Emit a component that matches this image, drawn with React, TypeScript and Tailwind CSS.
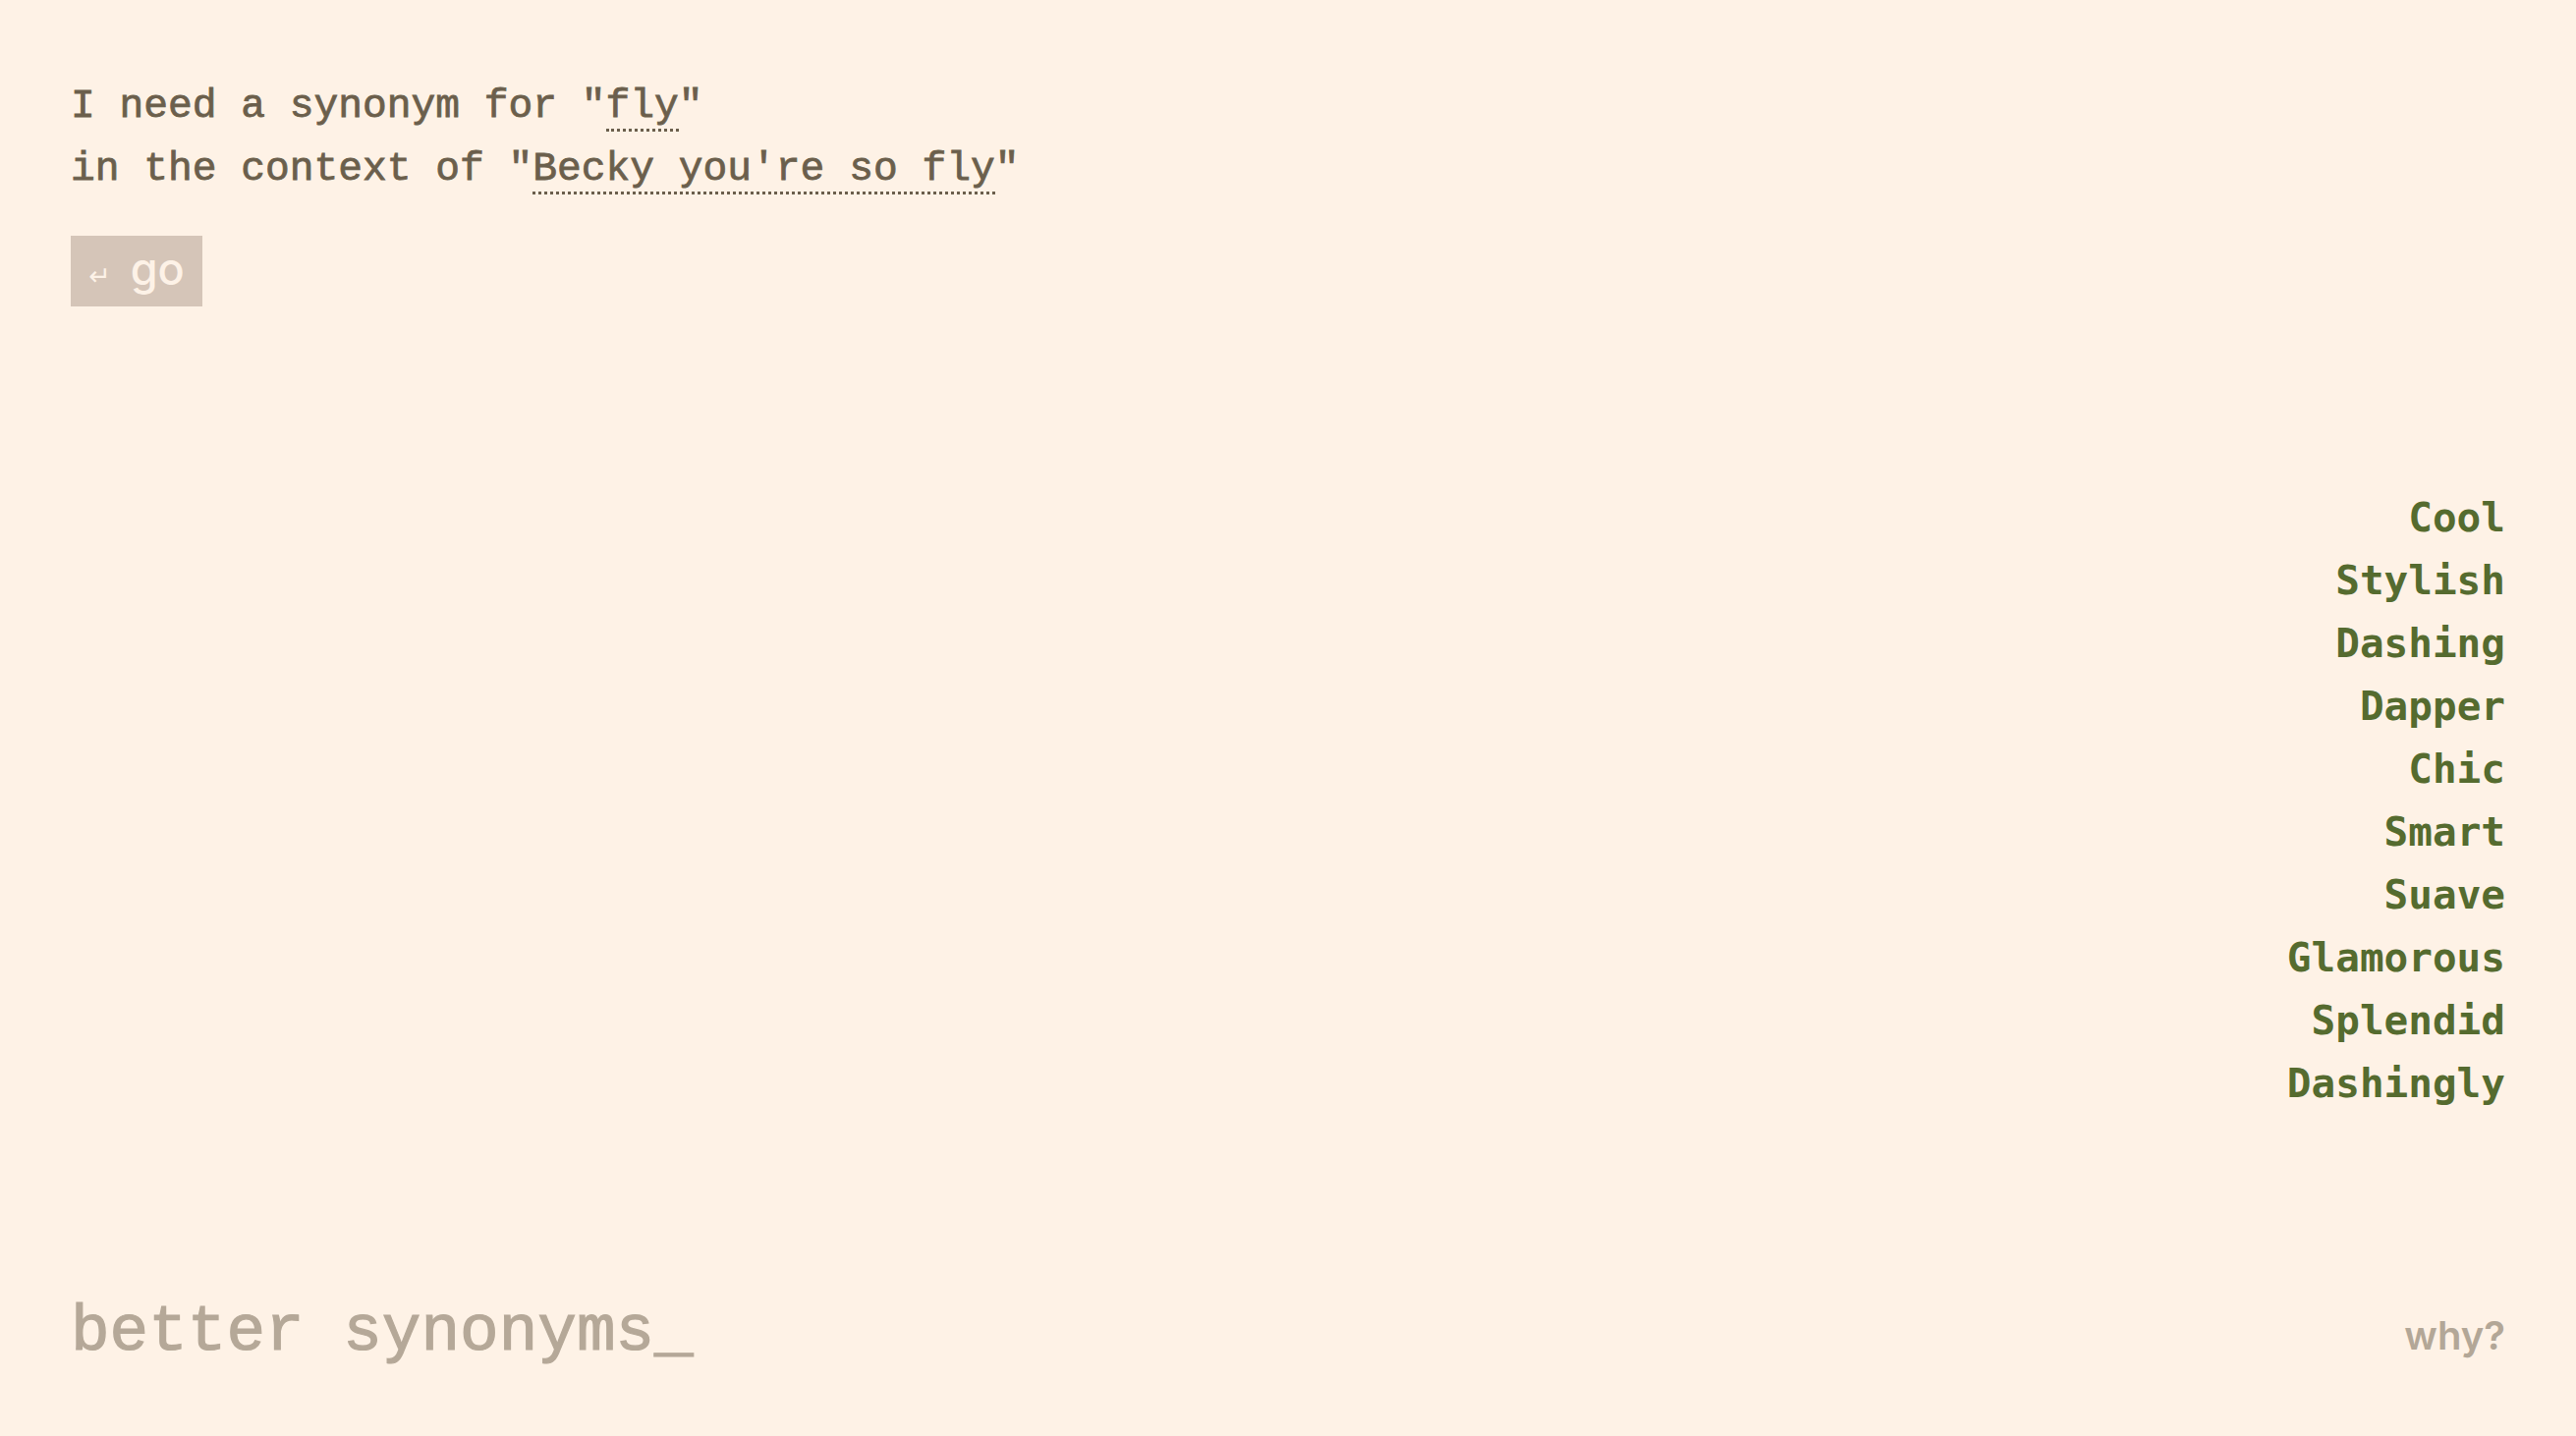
import React from "react"

const synonyms = [
  "Cool",
  "Stylish",
  "Dashing",
  "Dapper",
  "Chic",
  "Smart",
  "Suave",
  "Glamorous",
  "Splendid",
  "Dashingly",
]

export default function App() {
  return (
    <div className="min-h-screen bg-[#fef2e6] flex flex-col px-[72px] pt-[76px] pb-[72px]">
      <div className="font-['Liberation_Mono',monospace] text-[41.25px] leading-[64px] text-[#6b5f4c] whitespace-pre [-webkit-text-stroke:0.8px]">
        <div>
          I need a synonym for "<span className="border-b-[3px] border-dotted border-[#6b5f4c]">fly</span>"
        </div>
        <div>
          in the context of "<span className="border-b-[3px] border-dotted border-[#6b5f4c]">Becky you're so fly</span>"
        </div>
      </div>

      <div className="mt-[36px]">
        <button className="inline-flex items-baseline h-[72px] pt-[11px] pl-[18px] pr-[18px] gap-[20px] bg-[#d5c5b8] text-[#fdf2e7]">
          <span className="font-['DejaVu_Sans',sans-serif] text-[27px] leading-none">↵</span>
          <span className="font-['Inter',sans-serif] font-medium text-[45px] leading-none">go</span>
        </button>
      </div>

      <ul className="mt-[183px] self-end text-right font-['DejaVu_Sans_Mono',monospace] font-bold text-[41px] leading-[64px] text-[#556b2f]">
        {synonyms.map((s) => (
          <li key={s}>{s}</li>
        ))}
      </ul>

      <div className="mt-auto flex items-baseline justify-between">
        <div className="font-['Liberation_Mono',monospace] text-[66px] leading-none text-[#b5a898] [-webkit-text-stroke:1.2px]">
          better synonyms_
        </div>
        <a className="font-['Inter',sans-serif] font-semibold text-[40px] leading-none text-[#b3a797]">why?</a>
      </div>
    </div>
  )
}
